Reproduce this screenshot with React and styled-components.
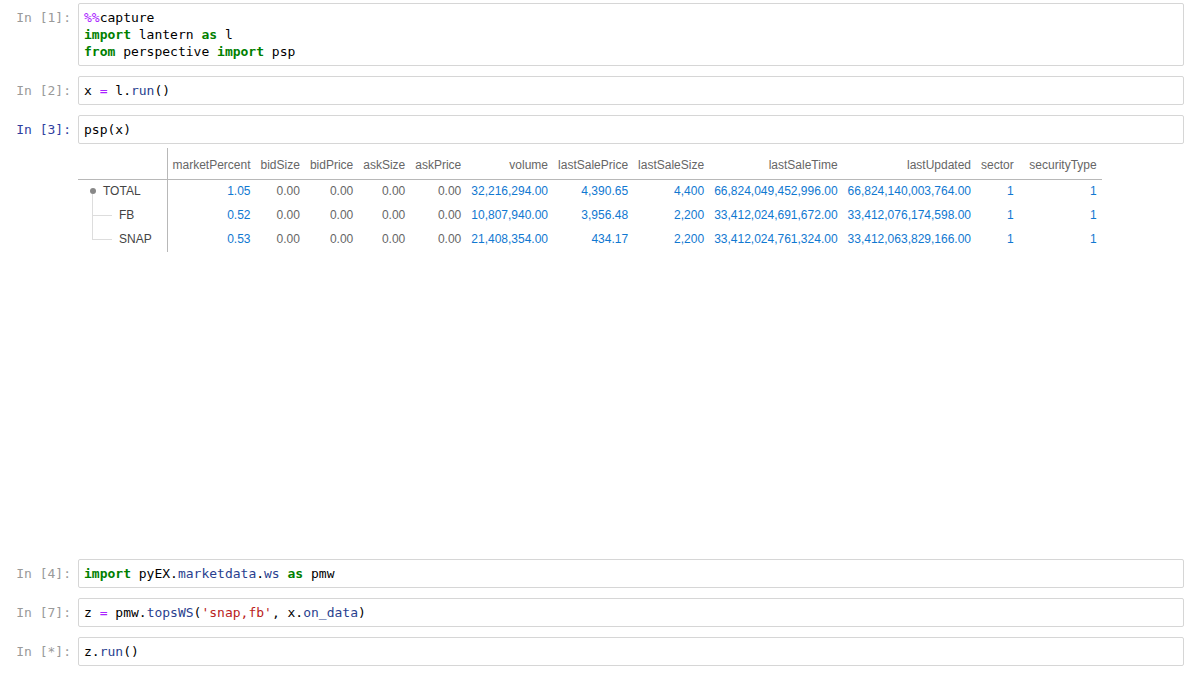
import React from 'react';
import styled, { createGlobalStyle } from 'styled-components';

const GlobalStyle = createGlobalStyle`
  html, body { margin: 0; padding: 0; background: #ffffff; }
  body { font-family: "Liberation Sans", Arial, sans-serif; }
`;

const MONO = `"DejaVu Sans Mono", "Liberation Mono", monospace`;

const Notebook = styled.div`
  display: flex;
  flex-direction: column;
  gap: 10px;
  padding: 3px 9px 0 0;
`;

const Cell = styled.div`
  display: grid;
  grid-template-columns: 78px 1fr;
`;

const Prompt = styled.div`
  font-family: ${MONO};
  font-size: 13px;
  line-height: 17px;
  padding: 6px 7px 0 0;
  text-align: right;
  white-space: pre;
  color: ${p => (p.$active ? '#303F9F' : '#9a9a9a')};
`;

const InputBox = styled.div`
  border: 1px solid #d6d6d6;
  border-radius: 2px;
  background: #ffffff;
  padding: 5px 5px;
  font-family: ${MONO};
  font-size: 13px;
  line-height: 17px;
  color: #000;
  white-space: pre;
`;

const Kw = styled.span`
  color: #008000;
  font-weight: bold;
`;
const Op = styled.span`
  color: #aa22ff;
`;
const Str = styled.span`
  color: #ba2121;
`;
const Prop = styled.span`
  color: #2a3f8f;
`;

const OutputArea = styled.div`
  grid-column: 2;
  height: 405px;
  padding-top: 4px;
  box-sizing: border-box;
`;

const Grid = styled.table`
  border-collapse: collapse;
  font-family: "Liberation Sans", Arial, sans-serif;
  font-size: 12px;
  white-space: nowrap;
`;

const HeadCell = styled.th`
  height: 31px;
  padding: 3px 5px 0 5px;
  min-width: ${p => p.$minWidth || 0}px;
  text-align: right;
  font-weight: normal;
  color: #666666;
  border-bottom: 1px solid #b8b8b8;
  vertical-align: middle;
  box-sizing: border-box;
`;

const CornerCell = styled.th`
  width: 89px;
  min-width: 89px;
  padding: 0;
  height: 31px;
  border-bottom: 1px solid #b8b8b8;
  border-right: 1px solid #b8b8b8;
  box-sizing: border-box;
`;

const LabelCell = styled.td`
  padding: 0 0 0 ${p => (p.$depth ? '14px' : '11px')};
  height: 24px;
  border-right: 1px solid #b8b8b8;
  box-sizing: border-box;
`;

const LabelInner = styled.div`
  display: flex;
  align-items: center;
  height: 24px;
  gap: 7px;
  color: #444444;
  transform: translateY(-1px);
`;

const Node = styled.span`
  width: 7px;
  align-self: stretch;
  display: flex;
  align-items: center;
  justify-content: center;
  background: linear-gradient(#dddddd, #dddddd) no-repeat 3px 15px / 1px 10px;
`;

const Dot = styled.span`
  width: 6px;
  height: 6px;
  border-radius: 50%;
  background: #888888;
`;

const Branch = styled.span`
  width: 20px;
  align-self: stretch;
  background:
    linear-gradient(#dddddd, #dddddd) no-repeat 0 0 / 1px ${p => (p.$last ? '13px' : 'calc(100% + 1px)')},
    linear-gradient(#dddddd, #dddddd) no-repeat 0 12px / 100% 1px;
`;

const ValueCell = styled.td`
  height: 24px;
  padding: 0 5px 1px 5px;
  text-align: right;
  box-sizing: border-box;
  color: ${p => (p.$zero ? '#666666' : '#1078d1')};
`;

const columns = [
  'marketPercent', 'bidSize', 'bidPrice', 'askSize', 'askPrice', 'volume',
  'lastSalePrice', 'lastSaleSize', 'lastSaleTime', 'lastUpdated', 'sector', 'securityType',
];

const minWidths = { securityType: 83 };

const rows = [
  {
    label: 'TOTAL', depth: 0,
    values: ['1.05', '0.00', '0.00', '0.00', '0.00', '32,216,294.00', '4,390.65', '4,400',
      '66,824,049,452,996.00', '66,824,140,003,764.00', '1', '1'],
  },
  {
    label: 'FB', depth: 1,
    values: ['0.52', '0.00', '0.00', '0.00', '0.00', '10,807,940.00', '3,956.48', '2,200',
      '33,412,024,691,672.00', '33,412,076,174,598.00', '1', '1'],
  },
  {
    label: 'SNAP', depth: 1, last: true,
    values: ['0.53', '0.00', '0.00', '0.00', '0.00', '21,408,354.00', '434.17', '2,200',
      '33,412,024,761,324.00', '33,412,063,829,166.00', '1', '1'],
  },
];

function PivotGrid() {
  return (
    <Grid>
      <thead>
        <tr>
          <CornerCell />
          {columns.map(c => (
            <HeadCell key={c} $minWidth={minWidths[c]}>{c}</HeadCell>
          ))}
        </tr>
      </thead>
      <tbody>
        {rows.map(r => (
          <tr key={r.label}>
            <LabelCell $depth={r.depth}>
              <LabelInner>
                {r.depth === 0 ? (
                  <Node><Dot /></Node>
                ) : (
                  <Branch $last={r.last} />
                )}
                {r.label}
              </LabelInner>
            </LabelCell>
            {r.values.map((v, i) => (
              <ValueCell key={columns[i]} $zero={v === '0.00'}>{v}</ValueCell>
            ))}
          </tr>
        ))}
      </tbody>
    </Grid>
  );
}

export default function App() {
  return (
    <>
      <GlobalStyle />
      <Notebook>
        <Cell>
          <Prompt>In [1]:</Prompt>
          <InputBox>
            <Op>%%</Op>capture{'\n'}
            <Kw>import</Kw> lantern <Kw>as</Kw> l{'\n'}
            <Kw>from</Kw> perspective <Kw>import</Kw> psp
          </InputBox>
        </Cell>
        <Cell>
          <Prompt>In [2]:</Prompt>
          <InputBox>
            x <Op>=</Op> l.<Prop>run</Prop>()
          </InputBox>
        </Cell>
        <Cell>
          <Prompt $active>In [3]:</Prompt>
          <InputBox>psp(x)</InputBox>
          <OutputArea>
            <PivotGrid />
          </OutputArea>
        </Cell>
        <Cell>
          <Prompt>In [4]:</Prompt>
          <InputBox>
            <Kw>import</Kw> pyEX.<Prop>marketdata</Prop>.<Prop>ws</Prop> <Kw>as</Kw> pmw
          </InputBox>
        </Cell>
        <Cell>
          <Prompt>In [7]:</Prompt>
          <InputBox>
            z <Op>=</Op> pmw.<Prop>topsWS</Prop>(<Str>'snap,fb'</Str>, x.<Prop>on_data</Prop>)
          </InputBox>
        </Cell>
        <Cell>
          <Prompt>In [*]:</Prompt>
          <InputBox>
            z.<Prop>run</Prop>()
          </InputBox>
        </Cell>
      </Notebook>
    </>
  );
}
